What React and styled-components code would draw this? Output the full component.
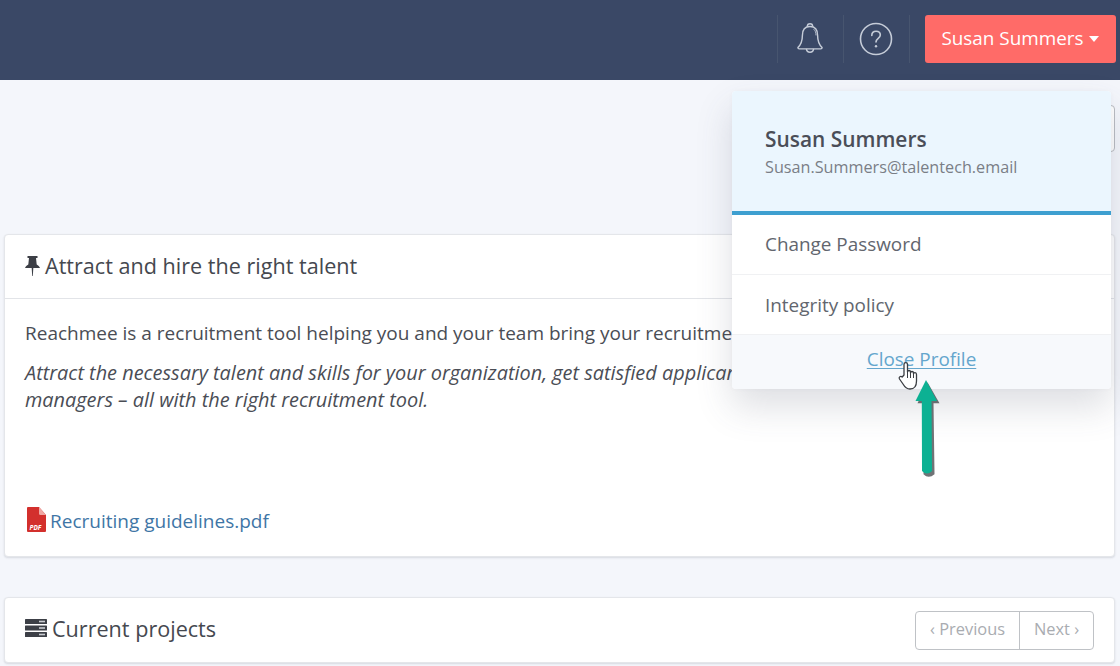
import React from 'react';
import styled, { createGlobalStyle } from 'styled-components';

const GlobalStyle = createGlobalStyle`
  html, body {
    margin: 0;
    height: 100%;
    overflow: hidden;
    background: #f4f6fb;
    font-family: 'Open Sans', 'Liberation Sans', sans-serif;
    color: #4a4d55;
  }
  * { box-sizing: border-box; }
`;

const Page = styled.div`
  position: relative;
  width: 1120px;
  height: 666px;
  overflow: hidden;
`;

// Barra superior
const TopBar = styled.header`
  height: 80px;
  padding: 15px 4px 0 0;
  background: #3a4866;
  display: flex;
  align-items: flex-start;
  justify-content: flex-end;
`;

const IconSlot = styled.div`
  width: 66px;
  height: 48px;
  padding-right: 2px;
  display: flex;
  align-items: center;
  justify-content: center;
  border-left: 1px solid #47556f;
`;

const ProfileSlot = styled.div`
  height: 48px;
  padding-left: 15px;
  border-left: 1px solid #47556f;
`;

const ProfileButton = styled.button`
  width: 191px;
  height: 48px;
  border: 0;
  border-radius: 3px;
  background: #ff6b68;
  color: #fff;
  font: 400 18.9px 'Open Sans', sans-serif;
  display: flex;
  align-items: center;
  justify-content: center;
  gap: 5px;
  padding: 0 1px 2px 0;
`;

const Caret = styled.span`
  width: 0;
  height: 0;
  margin-top: 2px;
  border-left: 5.5px solid transparent;
  border-right: 5.5px solid transparent;
  border-top: 6px solid #fff;
`;

const Content = styled.main`
  padding: 25px 5px 0 4px;
`;

const Toolbar = styled.div`
  height: 47px;
  margin-bottom: 82px;
  display: flex;
  justify-content: flex-end;
`;

const ToolbarButton = styled.div`
  width: 60px;
  border: 1px solid #b9bcc2;
  border-radius: 4px;
  background: #fff;
`;

const Card = styled.section`
  background: #fff;
  border: 1px solid #e4e6ea;
  border-radius: 4px;
  box-shadow: 0 1px 2px rgba(60, 70, 90, 0.16);
  margin-bottom: 40px;
`;

const CardHeader = styled.div`
  height: 64px;
  padding: 0 20px;
  display: flex;
  align-items: center;
  justify-content: space-between;
  border-bottom: ${({ $flat }) => ($flat ? '0' : '1px solid #e2e4e8')};
`;

const CardTitle = styled.h3`
  margin: 0 0 ${({ $lift }) => $lift}px;
  font-size: 21.6px;
  font-weight: 400;
  color: #45484f;
  display: flex;
  align-items: center;
  gap: ${({ $gap }) => $gap}px;
  svg { flex: none; }
`;

const CardBody = styled.div`
  height: 257px;
  padding: 21px 20px 0;
  display: flex;
  flex-direction: column;
`;

const Paragraph = styled.p`
  margin: 0 0 ${({ $italic }) => ($italic ? '0' : '12px')};
  font-size: ${({ $italic }) => ($italic ? '19.9px' : '19px')};
  line-height: 27px;
  font-style: ${({ $italic }) => ($italic ? 'italic' : 'normal')};
  color: #4a4d55;
  white-space: nowrap;
`;

const FileLink = styled.a`
  margin: 94px 0 0 2px;
  display: flex;
  align-items: center;
  gap: 3px;
  font-size: 19px;
  line-height: 27px;
  color: #3f76a6;
  svg { flex: none; margin-bottom: 4px; }
`;

const Pager = styled.div`
  display: flex;
  height: 39px;
  margin-top: 1px;
  border: 1px solid #bfc2c6;
  border-radius: 4px;
`;

const PagerButton = styled.span`
  width: ${({ $w }) => $w}px;
  padding-bottom: 4px;
  display: flex;
  align-items: center;
  justify-content: center;
  font-size: 16.4px;
  color: #a9acb1;
  & + & { border-left: 1px solid #bfc2c6; }
`;

// Menu do perfil (fica sobre o conteúdo)
const ProfileMenu = styled.div`
  position: absolute;
  top: 91px;
  left: 732px;
  width: 379px;
  height: 298px;
  background: #fff;
  border-radius: 4px;
  box-shadow: 0 18px 36px rgba(70, 80, 100, 0.18), 0 0 4px rgba(70, 80, 100, 0.04);
`;

const MenuHead = styled.div`
  height: 124px;
  padding: 35px 33px 0;
  background: #ebf6fe;
  border-bottom: 4px solid #3e9fd0;
  border-radius: 4px 4px 0 0;
`;

const MenuName = styled.div`
  font-size: 20.9px;
  font-weight: 600;
  line-height: 27px;
  color: #4a4e58;
`;

const MenuMail = styled.div`
  margin-top: 3px;
  font-size: 16.2px;
  line-height: 22px;
  color: #7a7e86;
`;

const MenuItem = styled.div`
  height: 60px;
  padding: 0 0 ${({ $pb }) => $pb}px 33px;
  display: flex;
  align-items: center;
  font-size: 18.9px;
  color: #62666e;
  border-bottom: 1px solid #f0f1f3;
`;

const MenuFooter = styled.div`
  height: 54px;
  padding-bottom: 6px;
  background: #f7f9fc;
  display: flex;
  align-items: center;
  justify-content: center;
  border-radius: 0 0 4px 4px;
`;

const CloseLink = styled.a`
  font-size: 18.9px;
  color: #64a6cd;
  text-decoration: underline;
  text-underline-offset: 2px;
`;

const Annotation = styled.svg`
  position: absolute;
  overflow: visible;
  top: ${({ $top }) => $top}px;
  left: ${({ $left }) => $left}px;
`;

function BellIcon() {
  return (
    <svg width="30" height="34" viewBox="0 0 32 38" fill="none" stroke="#c5ccd8" strokeWidth="1.6" strokeLinejoin="round">
      <path d="M16 5c-6 0-8.500 4.500-8.500 10 0 6-1.500 10-5 13.500 0 1 .5 1.500 1.500 1.500h24c1 0 1.500-.5 1.500-1.500-3.500-3.500-5-7.500-5-13.500 0-5.500-2.500-10-8.500-10z" />
      <path d="M13 5c0-4 6-4 6 0" />
      <path d="M12 30c.5 5 7.500 5 8 0" />
      <path d="M20 8c2 1.500 2.700 4 2.700 7" strokeWidth="1" />
    </svg>
  );
}

function HelpIcon() {
  return (
    <svg width="34" height="34" viewBox="0 0 34 34" fill="none" stroke="#c5ccd8" strokeWidth="1.6">
      <circle cx="17" cy="17" r="15.500" />
      <path d="M12.800 13.500c0-2.700 1.900-4.300 4.300-4.300s4.200 1.500 4.200 3.800c0 3.300-4.300 3.400-4.300 7" strokeLinecap="round" />
      <circle cx="17" cy="24.300" r="1.200" fill="#c5ccd8" stroke="none" />
    </svg>
  );
}

function PinIcon() {
  return (
    <svg width="15" height="20" viewBox="0 0 15 20" fill="#3c3f46">
      <path d="M2.500 0h10v2h-1.500l.7 6.500c1.500.8 2.800 2 3.300 3.500H0c.5-1.500 1.800-2.700 3.300-3.500L4 2H2.500z" />
      <path d="M6.700 12h1.600l-.5 8h-.6z" />
    </svg>
  );
}

function StackIcon() {
  return (
    <svg width="23" height="18" viewBox="0 0 23 18">
      <rect y="0" width="22" height="5" rx="0.6" fill="#3c3f46" />
      <rect y="6.500" width="22" height="5" rx="0.6" fill="#3c3f46" />
      <rect y="13" width="22" height="5" rx="0.6" fill="#3c3f46" />
      <rect x="14" y="1.700" width="6" height="1.600" fill="#c9cbd0" />
      <rect x="14" y="8.200" width="6" height="1.600" fill="#c9cbd0" />
      <rect x="14" y="14.700" width="6" height="1.600" fill="#c9cbd0" />
    </svg>
  );
}

function PdfIcon() {
  return (
    <svg width="20" height="25" viewBox="0 0 20 25">
      <path d="M1 0h11l7 8v16a1 1 0 0 1-1 1H1a1 1 0 0 1-1-1V1a1 1 0 0 1 1-1z" fill="#d3302d" />
      <path d="M12 0l7 8h-5.500a1.500 1.500 0 0 1-1.500-1.500z" fill="#f0a8a4" />
      <text x="2.500" y="23" fontFamily="'Open Sans', sans-serif" fontSize="6.500" fontWeight="700" fontStyle="italic" fill="#fff">PDF</text>
    </svg>
  );
}

function Arrow() {
  return (
    <Annotation $left={912} $top={378} width="30" height="100" viewBox="0 0 30 100">
      <path d="M4 24 L14 3 L26 24 L20 24 L21 95 Q15 100 10 95 L10 24 Z" fill="#23282c" opacity="0.65" transform="translate(1.500 1.200)" />
      <path d="M3.500 23 L14 2 L25 23 L19.500 23 L20 93 Q15 98 10 93 L9.800 23 Z" fill="#0cb193" />
    </Annotation>
  );
}

function HandCursor() {
  return (
    <Annotation $left={897} $top={360} width="24" height="32" viewBox="0 0 24 32">
      <path d="M7 15V4.500c0-2.400 3.500-2.400 3.500 0V12c0-2 3-2 3 0v1c0-2 3-2 3 0v1c0-1.800 3-1.800 3 .5V21c0 5-2.500 8-6.500 8-3.500 0-5-1.500-7-5L2.500 19c-1.200-2 1.200-3.500 2.700-2z" fill="#fff" stroke="#3a3d42" strokeWidth="1.300" strokeLinejoin="round" />
      <path d="M10.500 12v6M13.500 13v5M16.500 14v4" stroke="#3a3d42" strokeWidth="1" fill="none" />
    </Annotation>
  );
}

function App() {
  return (
    <Page>
      <GlobalStyle />
      <TopBar>
        <IconSlot><BellIcon /></IconSlot>
        <IconSlot><HelpIcon /></IconSlot>
        <ProfileSlot>
          <ProfileButton>Susan Summers <Caret /></ProfileButton>
        </ProfileSlot>
      </TopBar>

      <Content>
        <Toolbar><ToolbarButton /></Toolbar>

        <Card>
          <CardHeader>
            <CardTitle $gap={5} $lift={2}><PinIcon />Attract and hire the right talent</CardTitle>
          </CardHeader>
          <CardBody>
            <Paragraph>Reachmee is a recruitment tool helping you and your team bring your recruitment process</Paragraph>
            <Paragraph $italic>
              Attract the necessary talent and skills for your organization, get satisfied applicants and hiring
              <br />
              managers – all with the right recruitment tool.
            </Paragraph>
            <FileLink><PdfIcon />Recruiting guidelines.pdf</FileLink>
          </CardBody>
        </Card>

        <Card>
          <CardHeader $flat>
            <CardTitle $gap={4} $lift={4}><StackIcon />Current projects</CardTitle>
            <Pager>
              <PagerButton $w={103}>‹ Previous</PagerButton>
              <PagerButton $w={74}>Next ›</PagerButton>
            </Pager>
          </CardHeader>
        </Card>
      </Content>

      <ProfileMenu>
        <MenuHead>
          <MenuName>Susan Summers</MenuName>
          <MenuMail>Susan.Summers@talentech.email</MenuMail>
        </MenuHead>
        <MenuItem $pb={2}>Change Password</MenuItem>
        <MenuItem $pb={0}>Integrity policy</MenuItem>
        <MenuFooter><CloseLink>Close Profile</CloseLink></MenuFooter>
      </ProfileMenu>

      <Arrow />
      <HandCursor />
    </Page>
  );
}

export default App;
